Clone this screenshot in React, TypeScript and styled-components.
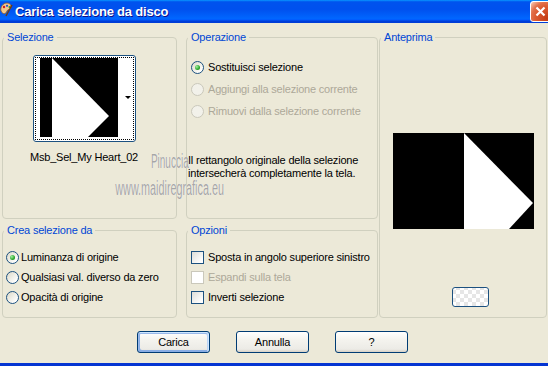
import styled, { createGlobalStyle, css } from "styled-components";

const Global = createGlobalStyle`
    html, body {
        margin: 0;
        padding: 0;
        background: #ece9d8;
    }
    body {
        font-family: "Liberation Sans", Arial, sans-serif;
        font-size: 11px;
        letter-spacing: -0.2px;
        color: #000;
    }
`;

const Window = styled.div`
    width: 548px;
    height: 366px;
    display: flex;
    flex-direction: column;
    overflow: hidden;
    background: #ece9d8;
`;

const TitleBar = styled.div`
    height: 23px;
    flex: none;
    display: flex;
    align-items: flex-start;
    overflow: hidden;
    background: linear-gradient(
        180deg,
        #0997ff 0%,
        #0053ee 8%,
        #0050ee 40%,
        #0066ff 80%,
        #005bff 86%,
        #003dd7 92%,
        #003dd7 100%
    );
`;

const TitleIcon = styled.svg`
    width: 13px;
    height: 15px;
    margin-top: 2px;
    flex: none;
`;

const TitleText = styled.span`
    margin: 4px 0 0 2px;
    color: #fff;
    font-weight: bold;
    font-size: 13px;
    line-height: 15px;
    letter-spacing: -0.2px;
    text-shadow: 1px 1px #0f1089;
`;

const CloseButton = styled.div`
    margin: 1px -3px 0 auto;
    width: 21px;
    height: 21px;
    box-sizing: border-box;
    border: 1px solid #fff;
    border-radius: 3px;
    display: flex;
    align-items: center;
    justify-content: center;
    background: radial-gradient(circle at 85% 85%, #c33b13 0%, #db5a30 50%, #e1704a 70%, #f3b79d 92%, #fff 100%);
`;

const Body = styled.div`
    position: relative;
    flex: 1;
    display: flex;
    flex-direction: column;
    border-bottom: 3px solid #0535d2;
`;

const Panels = styled.div`
    display: grid;
    grid-template-columns: 184px 193px 168px;
    grid-template-rows: 188px 94px;
    row-gap: 5px;
    padding: 8px 0 0 2px;
`;

const Group = styled.fieldset<{ $w: number; $span?: boolean }>`
    width: ${(p) => p.$w}px;
    box-sizing: border-box;
    min-width: 0;
    margin: 0;
    padding: 0;
    border: 1px solid #d0d0bf;
    border-radius: 4px;
    ${(p) =>
        p.$span &&
        css`
            grid-column: 3;
            grid-row: 1 / span 2;
        `}
`;

const Legend = styled.legend`
    margin-left: 1px;
    padding: 0 3px;
    color: #0046d5;
    font-size: 11px;
    line-height: 13px;
`;

const SelectionBody = styled.div`
    display: flex;
    flex-direction: column;
    align-items: center;
    padding: 11px 11px 0 0;
`;

const Thumb = styled.div`
    position: relative;
    width: 103px;
    height: 87px;
    box-sizing: border-box;
    padding: 2px 0 0 6px;
    border: 1px solid #1c5180;
    border-radius: 3px;
    background: #fff;
`;

const FocusRing = styled.div`
    position: absolute;
    inset: 1px;
    border: 1px dotted #000;
`;

const DropArrow = styled.div`
    position: absolute;
    right: 4px;
    top: 40px;
    width: 0;
    height: 0;
    border-left: 3px solid transparent;
    border-right: 3px solid transparent;
    border-top: 3px solid #000;
`;

const ThumbName = styled.div`
    margin-top: 9px;
    line-height: 13px;
`;

const OptionList = styled.div<{ $top: number; $left: number }>`
    display: flex;
    flex-direction: column;
    padding: ${(p) => p.$top}px 0 0 ${(p) => p.$left}px;
`;

const Option = styled.label<{ $h: number; $gap: number; $disabled?: boolean }>`
    display: flex;
    align-items: center;
    height: ${(p) => p.$h}px;
    gap: ${(p) => p.$gap}px;
    color: ${(p) => (p.$disabled ? "#aca899" : "#000")};
    white-space: nowrap;
`;

const RadioMark = styled.span<{ $checked?: boolean; $disabled?: boolean }>`
    position: relative;
    width: 13px;
    height: 13px;
    flex: none;
    box-sizing: border-box;
    border-radius: 50%;
    border: 1px solid ${(p) => (p.$disabled ? "#cac8bb" : "#1c5180")};
    background: ${(p) => (p.$disabled ? "#f2f1ea" : "linear-gradient(135deg, #dcd9c8 0%, #fff 85%)")};
    ${(p) =>
        p.$checked &&
        css`
            &::after {
                content: "";
                position: absolute;
                left: 3px;
                top: 3px;
                width: 5px;
                height: 5px;
                border-radius: 50%;
                background: radial-gradient(circle at 35% 35%, #a0f0a0 0%, #2ba62b 60%, #127012 100%);
            }
        `}
`;

const CheckMark = styled.span<{ $disabled?: boolean }>`
    width: 13px;
    height: 13px;
    flex: none;
    box-sizing: border-box;
    border: 1px solid ${(p) => (p.$disabled ? "#cac8bb" : "#1c5180")};
    background: ${(p) => (p.$disabled ? "#fff" : "linear-gradient(135deg, #dcdcd7 0%, #fff 85%)")};
`;

const Note = styled.div`
    margin: 32px 0 0 1px;
    line-height: 13px;
`;

const PreviewBody = styled.div`
    display: flex;
    flex-direction: column;
    align-items: center;
    padding-top: 89px;
`;

const PatternButton = styled.div`
    margin: 58px 0 0 15px;
    width: 37px;
    height: 20px;
    box-sizing: border-box;
    border: 1px solid #1c5180;
    border-radius: 3px;
    background-color: #fff;
    background-image: repeating-conic-gradient(#e6e6e6 0 25%, #fff 0 50%);
    background-size: 8px 8px;
    background-position: 3px 2px;
`;

const ButtonRow = styled.div`
    display: flex;
    justify-content: center;
    gap: 26px;
    margin-top: 13px;
    padding-right: 3px;
`;

const PushButton = styled.button<{ $default?: boolean }>`
    width: 73px;
    height: 22px;
    padding: 0;
    border: 1px solid #003c74;
    border-radius: 3px;
    font-family: "Liberation Sans", Arial, sans-serif;
    font-size: 11px;
    letter-spacing: -0.2px;
    color: #000;
    background: linear-gradient(180deg, #fff 0%, #f4f3ee 40%, #ecebe6 86%, #d6d0c5 100%);
    ${(p) =>
        p.$default &&
        css`
            box-shadow: inset -1px 1px #cee7ff, inset 1px 2px #98b8ea, inset -2px 2px #bcd4f6,
                inset 1px -1px #89ade4, inset 2px -2px #89ade4;
        `}
`;

const Watermark = styled.div`
    position: absolute;
    left: 100px;
    top: 128px;
    width: 140px;
    display: flex;
    flex-direction: column;
    align-items: center;
    color: #a6a6a6;
    font-family: "Liberation Sans", Arial, sans-serif;
    font-size: 20px;
    letter-spacing: 0;
    pointer-events: none;
    text-shadow: 0 0 1px #fff;
`;

const MarkLine = styled.span<{ $scale: number; $mt: number }>`
    display: block;
    margin-top: ${(p) => p.$mt}px;
    line-height: 20px;
    transform: scaleX(${(p) => p.$scale});
    white-space: nowrap;
`;

const Radio = ({ label, checked, disabled, h, gap }: { label: string; checked?: boolean; disabled?: boolean; h: number; gap: number }) => (
    <Option $h={h} $gap={gap} $disabled={disabled}>
        <RadioMark $checked={checked} $disabled={disabled} />
        {label}
    </Option>
);

const Check = ({ label, disabled }: { label: string; disabled?: boolean }) => (
    <Option $h={20} $gap={4} $disabled={disabled}>
        <CheckMark $disabled={disabled} />
        {label}
    </Option>
);

const App = () => {
    return (
        <Window>
            <Global />
            <TitleBar>
                <TitleIcon viewBox="0 0 13 15">
                    <path d="M1 9 C0 5 3 1 7 1 C11 1 12 5 10 7 C9 8 8 7 7 9 C6 12 3 13 1 9 Z" fill="#f1c78c" stroke="#8a5a2a" strokeWidth="0.8" />
                    <circle cx="4" cy="5" r="1.2" fill="#d02020" />
                    <circle cx="7" cy="3.8" r="1.1" fill="#2050d0" />
                    <circle cx="9.5" cy="5" r="1" fill="#20a040" />
                    <path d="M6 14 L12 3" stroke="#6b3a12" strokeWidth="1.4" />
                </TitleIcon>
                <TitleText>Carica selezione da disco</TitleText>
                <CloseButton>
                    <svg width="11" height="11" viewBox="0 0 11 11">
                        <path d="M1.5 1.5 L9.5 9.5 M9.5 1.5 L1.5 9.5" stroke="#fff" strokeWidth="2.2" />
                    </svg>
                </CloseButton>
            </TitleBar>
            <Body>
                <Panels>
                    <Group $w={175}>
                        <Legend>Selezione</Legend>
                        <SelectionBody>
                            <Thumb>
                                <FocusRing />
                                <svg width="78" height="79" viewBox="0 0 78 79" style={{ display: "block", position: "relative" }}>
                                    <rect width="78" height="79" fill="#000" />
                                    <polygon points="12,0 69,58 48,79 12,79" fill="#fff" />
                                </svg>
                                <DropArrow />
                            </Thumb>
                            <ThumbName>Msb_Sel_My Heart_02</ThumbName>
                        </SelectionBody>
                    </Group>
                    <Group $w={192}>
                        <Legend>Operazione</Legend>
                        <OptionList $top={12} $left={4}>
                            <Radio label="Sostituisci selezione" checked h={22} gap={4} />
                            <Radio label="Aggiungi alla selezione corrente" disabled h={22} gap={4} />
                            <Radio label="Rimuovi dalla selezione corrente" disabled h={22} gap={4} />
                        </OptionList>
                        <Note>
                            Il rettangolo originale della selezione
                            <br />
                            intersecherà completamente la tela.
                        </Note>
                    </Group>
                    <Group $w={168} $span>
                        <Legend>Anteprima</Legend>
                        <PreviewBody>
                            <svg width="141" height="96" viewBox="0 0 141 96">
                                <rect width="141" height="96" fill="#000" />
                                <polygon points="71,0 140,70 116,96 71,96" fill="#fff" />
                            </svg>
                            <PatternButton />
                        </PreviewBody>
                    </Group>
                    <Group $w={175}>
                        <Legend>Crea selezione da</Legend>
                        <OptionList $top={10} $left={3}>
                            <Radio label="Luminanza di origine" checked h={20} gap={2} />
                            <Radio label="Qualsiasi val. diverso da zero" h={20} gap={2} />
                            <Radio label="Opacità di origine" h={20} gap={2} />
                        </OptionList>
                    </Group>
                    <Group $w={192}>
                        <Legend>Opzioni</Legend>
                        <OptionList $top={10} $left={4}>
                            <Check label="Sposta in angolo superiore sinistro" />
                            <Check label="Espandi sulla tela" disabled />
                            <Check label="Inverti selezione" />
                        </OptionList>
                    </Group>
                </Panels>
                <ButtonRow>
                    <PushButton $default>Carica</PushButton>
                    <PushButton>Annulla</PushButton>
                    <PushButton>?</PushButton>
                </ButtonRow>
                <Watermark>
                    <MarkLine $scale={0.5} $mt={0}>Pinuccia</MarkLine>
                    <MarkLine $scale={0.54} $mt={7}>www.maidiregrafica.eu</MarkLine>
                </Watermark>
            </Body>
        </Window>
    );
};

export default App;
